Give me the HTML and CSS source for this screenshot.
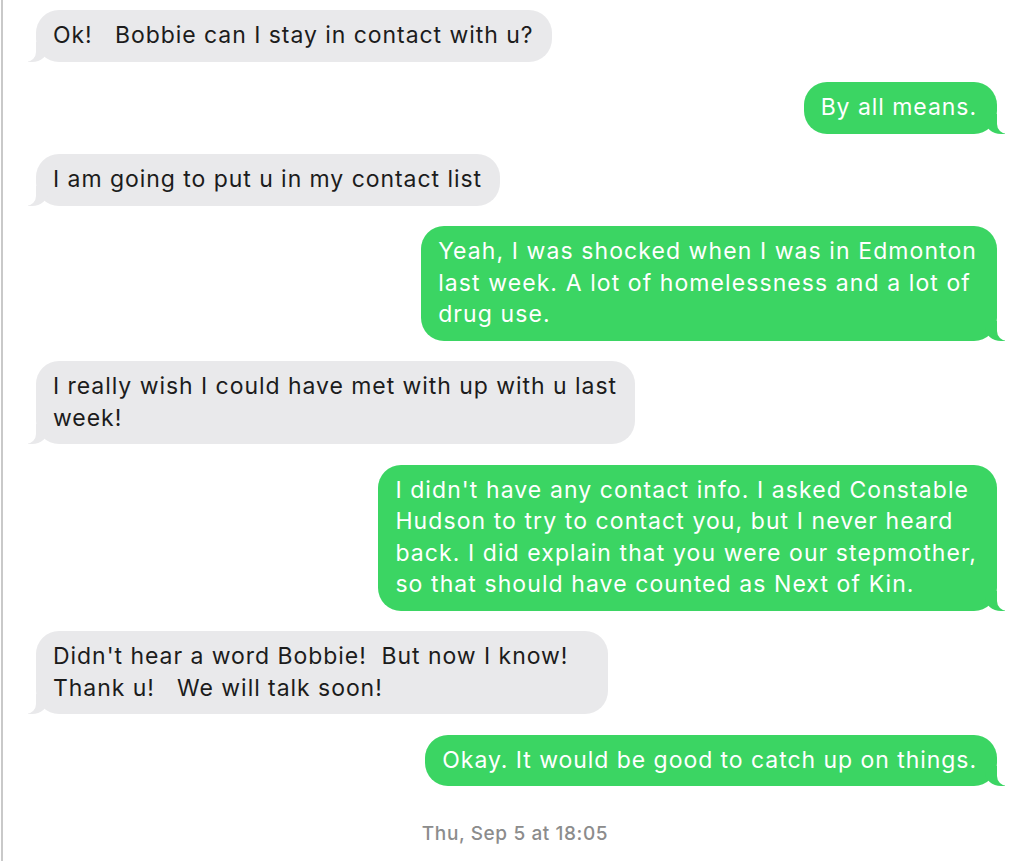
FILE: index.html
```html
<!DOCTYPE html>
<html lang="en">
<head>
<meta charset="utf-8">
<title>Messages</title>
<link rel="stylesheet" href="styles.css">
</head>
<body>
<div class="pane">
  <div class="thread">
    <div class="bubble in">Ok!&nbsp;&nbsp; Bobbie can I stay in contact with u?</div>
    <div class="bubble out">By all means.</div>
    <div class="bubble in">I am going to put u in my contact list</div>
    <div class="bubble out multi">Yeah, I was shocked when I was in Edmonton<br>last week. A lot of homelessness and a lot of<br>drug use.</div>
    <div class="bubble in">I really wish I could have met with up with u last<br>week!</div>
    <div class="bubble out multi">I didn't have any contact info. I asked Constable<br>Hudson to try to contact you, but I never heard<br>back. I did explain that you were our stepmother,<br>so that should have counted as Next of Kin.</div>
    <div class="bubble in loose">Didn't hear a word Bobbie!&nbsp; But now I know!<br>Thank u!&nbsp;&nbsp; We will talk soon!</div>
    <div class="bubble out">Okay. It would be good to catch up on things.</div>
  </div>
  <div class="stamp">Thu, Sep 5 at 18:05</div>
</div>
</body>
</html>
```
FILE: styles.css
```css
html, body {
  margin: 0;
  padding: 0;
  background: #ffffff;
}

body {
  font-family: Inter, "Liberation Sans", sans-serif;
}

.pane {
  margin-left: 1px;
  border-left: 2px solid #c9c9c9;
  min-height: 861px;
  box-sizing: border-box;
  padding-top: 10px;
}

.thread {
  display: flex;
  flex-direction: column;
  gap: 20.5px;
}

.bubble {
  position: relative;
  padding: 10px 18px 10px 17px;
  border-radius: 23px;
  font-size: 23px;
  line-height: 31.5px;
  letter-spacing: 0.95px;
  white-space: nowrap;
}

.bubble.in {
  align-self: flex-start;
  margin-left: 33px;
  background: #e9e9eb;
  color: #1c1c1c;
}

.bubble.in.loose {
  padding-right: 40px;
}

.bubble.out {
  align-self: flex-end;
  margin-right: 26px;
  background: #3bd563;
  color: #ffffff;
  padding-right: 20px;
}

.bubble.out.multi {
  letter-spacing: 1.08px;
}

.bubble::before,
.bubble::after {
  content: "";
  position: absolute;
  bottom: 0;
  height: 20px;
}

.bubble.out::before {
  right: -8px;
  width: 20px;
  background: #3bd563;
  border-bottom-left-radius: 16px 14px;
}

.bubble.out::after {
  right: -26px;
  width: 26px;
  background: #ffffff;
  border-bottom-left-radius: 10px;
}

.bubble.in::before {
  left: -8px;
  width: 20px;
  background: #e9e9eb;
  border-bottom-right-radius: 16px 14px;
}

.bubble.in::after {
  left: -26px;
  width: 26px;
  background: #ffffff;
  border-bottom-right-radius: 10px;
}

.stamp {
  margin-top: 37px;
  text-align: center;
  font-size: 19px;
  line-height: 22px;
  letter-spacing: 0.6px;
  color: #8c8c8c;
  font-weight: 500;
  padding-left: 4px;
}
```
